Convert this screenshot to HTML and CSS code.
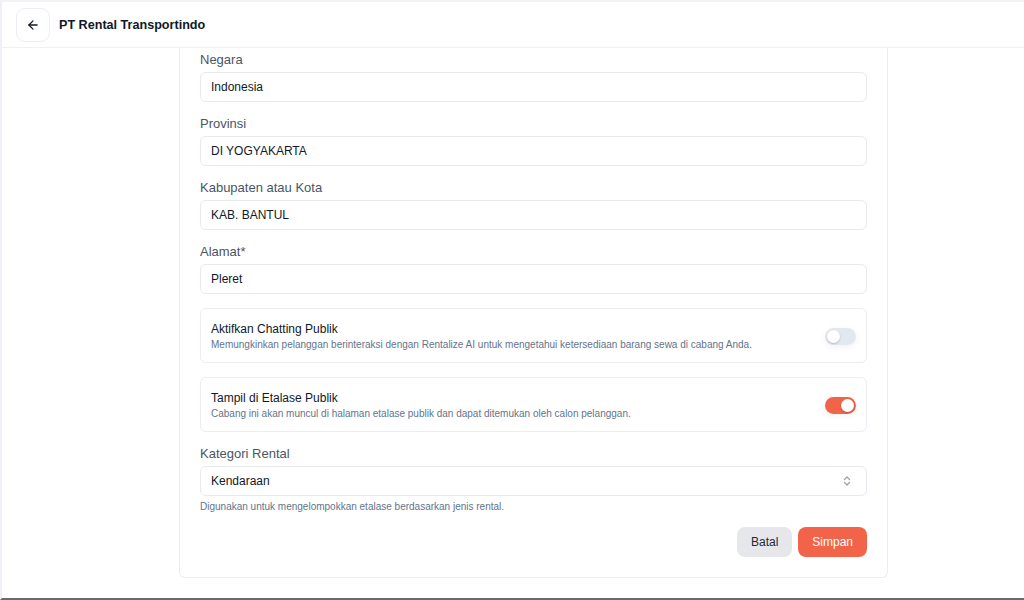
FILE: index.html
```html
<!DOCTYPE html>
<html lang="id">
<head>
<meta charset="utf-8">
<title>PT Rental Transportindo</title>
<link rel="stylesheet" href="styles.css">
</head>
<body>
<div class="frame">
  <header class="topbar">
    <button class="back-btn" aria-label="Kembali">
      <svg width="14" height="14" viewBox="0 0 24 24" fill="none" stroke="#111827" stroke-width="2.2" stroke-linecap="round" stroke-linejoin="round"><path d="M19 12H5"/><path d="M12 19l-7-7 7-7"/></svg>
    </button>
    <h1 class="title">PT Rental Transportindo</h1>
  </header>
  <main class="main">
    <section class="card">
      <div class="field">
        <label class="label">Negara</label>
        <div class="input">Indonesia</div>
      </div>
      <div class="field">
        <label class="label">Provinsi</label>
        <div class="input">DI YOGYAKARTA</div>
      </div>
      <div class="field">
        <label class="label">Kabupaten atau Kota</label>
        <div class="input">KAB. BANTUL</div>
      </div>
      <div class="field">
        <label class="label">Alamat*</label>
        <div class="input">Pleret</div>
      </div>
      <div class="toggle-card">
        <div class="toggle-text">
          <div class="toggle-title">Aktifkan Chatting Publik</div>
          <div class="toggle-desc">Memungkinkan pelanggan berinteraksi dengan Rentalize AI untuk mengetahui ketersediaan barang sewa di cabang Anda.</div>
        </div>
        <span class="switch"><span class="knob"></span></span>
      </div>
      <div class="toggle-card">
        <div class="toggle-text">
          <div class="toggle-title">Tampil di Etalase Publik</div>
          <div class="toggle-desc">Cabang ini akan muncul di halaman etalase publik dan dapat ditemukan oleh calon pelanggan.</div>
        </div>
        <span class="switch on"><span class="knob"></span></span>
      </div>
      <div class="field">
        <label class="label">Kategori Rental</label>
        <div class="input select">
          <span>Kendaraan</span>
          <svg width="10" height="12" viewBox="0 0 10 12" fill="none" stroke="#9ca3af" stroke-width="1.3" stroke-linecap="round" stroke-linejoin="round"><path d="M2.5 4.5L5 2l2.5 2.5"/><path d="M2.5 7.5L5 10l2.5-2.5"/></svg>
        </div>
        <p class="help">Digunakan untuk mengelompokkan etalase berdasarkan jenis rental.</p>
      </div>
      <div class="actions">
        <button class="btn btn-cancel">Batal</button>
        <button class="btn btn-save">Simpan</button>
      </div>
    </section>
  </main>
</div>
</body>
</html>
```
FILE: styles.css
```css
* { box-sizing: border-box; }
html, body { margin: 0; padding: 0; }
body {
  font-family: "Liberation Sans", Arial, sans-serif;
  color: #111827;
  background: #ffffff;
}
.frame {
  width: 1024px;
  height: 600px;
  border-top: 2px solid #f1f3f6;
  border-left: 2px solid #eef1f5;
  border-bottom: 2px solid #6b6b6b;
  display: flex;
  flex-direction: column;
  overflow: hidden;
}
.topbar {
  height: 46px;
  flex: none;
  display: flex;
  align-items: center;
  gap: 9px;
  padding-left: 14px;
  border-bottom: 1px solid #eef1f6;
}
.back-btn {
  width: 34px;
  height: 34px;
  border: 1px solid #eceef2;
  border-radius: 9px;
  background: #fff;
  display: flex;
  align-items: center;
  justify-content: center;
  padding: 0;
}
.title {
  margin: 0;
  font-family: "Liberation Sans", Arial, sans-serif;
  font-size: 12.6px;
  font-weight: 700;
  color: #111827;
}
.main {
  flex: 1;
  padding-left: 177px;
}
.card {
  width: 709px;
  border: 1px solid #eaedf2;
  border-top: none;
  border-radius: 0 0 6px 6px;
  padding: 4px 20px 20px;
  display: flex;
  flex-direction: column;
  gap: 14px;
}
.field {
  display: flex;
  flex-direction: column;
  gap: 4px;
}
.label {
  font-size: 13px;
  line-height: 16px;
  color: #4b5563;
}
.input {
  height: 30px;
  border: 1px solid #e6e9ee;
  border-radius: 6px;
  padding: 0 10px;
  display: flex;
  align-items: center;
  font-size: 12px;
  color: #111827;
}
.select {
  justify-content: space-between;
  padding-right: 14px;
}
.help {
  margin: 0;
  font-size: 10px;
  line-height: 13px;
  color: #64748b;
}
.toggle-card {
  height: 55px;
  border: 1px solid #eaedf2;
  border-radius: 6px;
  padding: 2px 10px 0 10px;
  display: flex;
  align-items: center;
  justify-content: space-between;
}
.toggle-text {
  display: flex;
  flex-direction: column;
  gap: 1px;
}
.toggle-title {
  font-size: 12px;
  line-height: 16px;
  color: #111827;
}
.toggle-desc {
  font-size: 10px;
  line-height: 14px;
  color: #64748b;
}
.switch {
  width: 31px;
  height: 17px;
  border-radius: 9px;
  background: #e2e8f0;
  padding: 2px;
  display: flex;
  justify-content: flex-start;
  box-shadow: 0 2px 6px rgba(0,0,0,0.06);
}
.switch.on {
  background: #f1644a;
  justify-content: flex-end;
}
.knob {
  width: 13px;
  height: 13px;
  border-radius: 50%;
  background: #fff;
  box-shadow: 0 1px 2px rgba(0,0,0,0.2);
}
.actions {
  display: flex;
  justify-content: flex-end;
  gap: 6px;
}
.btn {
  height: 30px;
  border: none;
  border-radius: 8px;
  font-family: "Liberation Sans", Arial, sans-serif;
  font-size: 12px;
  padding: 0 14px;
}
.btn-cancel {
  background: #e5e7eb;
  color: #1f2937;
}
.btn-save {
  background: #f1644a;
  color: #fff;
}
```
